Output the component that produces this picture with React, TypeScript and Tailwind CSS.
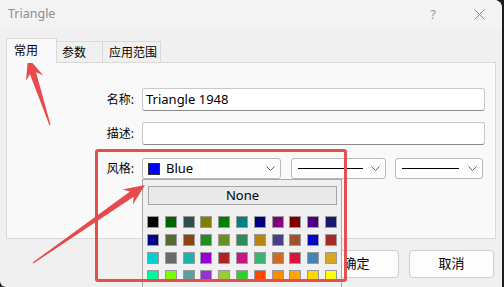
import React from "react";

const FONT = { fontFamily: '"Noto Sans", "Noto Sans CJK SC", sans-serif' };

const COLORS = [
  ["#000000", "#006400", "#2F4F4F", "#808000", "#008000", "#008080", "#000080", "#800080", "#800000", "#4B0082", "#191970"],
  ["#00008B", "#556B2F", "#8B4513", "#228B22", "#6B8E23", "#2E8B57", "#B8860B", "#483D8B", "#A0522D", "#0000CD", "#A52A2A"],
  ["#00CED1", "#696969", "#20B2AA", "#9400D3", "#B22222", "#C71585", "#3CB371", "#D2691E", "#DC143C", "#4682B4", "#DAA520"],
  ["#00FA9A", "#7CFC00", "#5F9EA0", "#9932CC", "#9ACD32", "#32CD32", "#FF4500", "#FF8C00", "#FFA500", "#FFD700", "#FFFF00"],
];

function Chevron() {
  return (
    <svg width="9" height="5" viewBox="0 0 9 5" className="shrink-0">
      <path d="M0.5 0.5 L4.5 4.5 L8.5 0.5" fill="none" stroke="#606060" strokeWidth="1" />
    </svg>
  );
}

function LineCombo({ width, line }: { width: string; line: string }) {
  return (
    <div className={`${width} h-[21px] flex items-center justify-between pl-[6px] pr-[5px] bg-[#fdfdfd] border border-[#b9b9b9] rounded-[3px]`}>
      <div className={`${line} h-px bg-black`} />
      <Chevron />
    </div>
  );
}

// Snipaste-style annotation arrow, from tail (sx,sy) to tip (tx,ty)
function arrowPoints(sx: number, sy: number, tx: number, ty: number) {
  const dx = tx - sx;
  const dy = ty - sy;
  const len = Math.hypot(dx, dy);
  const ux = dx / len;
  const uy = dy / len;
  const nx = -uy;
  const ny = ux;
  const at = (back: number, side: number) =>
    `${tx - ux * back + nx * side},${ty - uy * back + ny * side}`;
  const tail = (side: number) => `${sx + nx * side},${sy + ny * side}`;
  return [
    at(0, 0),
    at(21, 9),
    at(16, 3.2),
    tail(0.6),
    tail(-0.6),
    at(16, -3.2),
    at(21, -9),
  ].join(" ");
}

export default function App() {
  return (
    <div className="relative w-[504px] h-[287px] overflow-hidden bg-[#1d1d1d]" style={FONT}>
      {/* Dialog window */}
      <div className="w-[502px] h-full bg-[#f0f0f0] rounded-tr-[8px] rounded-bl-[6px] flex flex-col">
        {/* Title bar */}
        <div className="h-[29px] bg-[#f3f3f3] flex items-center pl-[8px] text-[12.5px] text-[#8e8e8e] rounded-tr-[8px]">
          <span>Triangle</span>
          <span className="ml-auto mr-[38px] text-[13px] text-[#9a9a9a]">?</span>
          <svg width="11" height="11" viewBox="0 0 11 11" className="mr-[17px]">
            <path d="M0.5 0.5 L10.5 10.5 M10.5 0.5 L0.5 10.5" stroke="#8a8a8a" strokeWidth="1" />
          </svg>
        </div>

        {/* Tabs */}
        <div className="mt-[9px] px-[6px] flex items-end h-[25px] text-[12px] text-black">
          <div className="relative z-10 w-[51px] h-[25px] bg-[#f9f9f9] border border-[#d9d9d9] border-b-0 pl-[7px] pt-[3px]">
            常用
          </div>
          <div className="w-[46px] h-[22px] border border-[#d9d9d9] border-l-0 flex items-center pl-[5px] pt-[1px]">
            参数
          </div>
          <div className="w-[58px] h-[22px] border border-[#d9d9d9] border-l-0 flex items-center pl-[6px] pt-[1px]">
            应用范围
          </div>
        </div>

        {/* Panel */}
        <div className="mx-[6px] -mt-px h-[177px] bg-[#f9f9f9] border border-[#d9d9d9] pt-[25px] pr-[10px]">
          <div className="grid grid-cols-[127px_1fr] gap-x-[8px] items-center text-[12px]">
            <div className="text-right">名称:</div>
            <div className="h-[23px] bg-white border border-[#c8c8c8] border-b-[#8a8a8a] rounded-[3px] flex items-center pl-[3px] text-[13px]">
              Triangle 1948
            </div>

            <div className="text-right mt-[11px]">描述:</div>
            <div className="mt-[11px] h-[23px] bg-white border border-[#c8c8c8] border-b-[#8a8a8a] rounded-[3px]" />

            <div className="text-right mt-[13px]">风格:</div>
            <div className="mt-[13px] flex items-center">
              <div className="w-[139px] h-[21px] flex items-center pl-[5px] pr-[5px] bg-[#fdfdfd] border border-[#b9b9b9] rounded-[3px]">
                <div className="w-[12px] h-[12px] bg-[#0000ff] border border-[#303030]" />
                <span className="ml-[6px] text-[13px]">Blue</span>
                <span className="ml-auto">
                  <Chevron />
                </span>
              </div>
              <div className="ml-[10px]">
                <LineCombo width="w-[95px]" line="w-[65px]" />
              </div>
              <div className="ml-[9px]">
                <LineCombo width="w-[88px]" line="w-[57px]" />
              </div>
            </div>
          </div>
        </div>

        {/* Buttons */}
        <div className="mt-[11px] flex justify-end gap-[10px] pr-[8px] text-[13px]">
          <div className="w-[85px] h-[28px] bg-[#fdfdfd] border border-[#d0d0d0] rounded-[4px] flex items-center justify-center">
            确定
          </div>
          <div className="w-[85px] h-[28px] bg-[#fdfdfd] border border-[#d0d0d0] rounded-[4px] flex items-center justify-center">
            取消
          </div>
        </div>
      </div>

      {/* Colour dropdown */}
      <div className="absolute left-[142px] top-[179px] w-[200px] h-[120px] bg-[#f0f0f0] border border-[#a8a8a8] pt-[6px] pl-[4px]">
        <div className="ml-[1px] w-[189px] h-[19px] bg-[#e9e9e9] border border-[#a6a6a6] flex items-center justify-center text-[13px]">
          None
        </div>
        <div className="mt-[11px] flex flex-col gap-y-[6px]">
          {COLORS.map((row, r) => (
            <div key={r} className="flex gap-x-[5.8px]">
              {row.map((c) => (
                <div
                  key={c}
                  className="w-[12px] h-[12px] border border-[#9a9a9a]"
                  style={{ backgroundColor: c }}
                />
              ))}
            </div>
          ))}
        </div>
      </div>

      {/* Annotation: highlight box */}
      <div className="absolute left-[95px] top-[149px] w-[252px] h-[133px] border-[3.5px] border-[#e44f50] rounded-[3px] pointer-events-none" />

      {/* Annotation: arrows */}
      <svg className="absolute inset-0 pointer-events-none" width="504" height="287">
        <polygon points={arrowPoints(50, 125, 28, 58)} fill="#e64a4c" />
        <polygon points={arrowPoints(33, 263, 145, 185)} fill="#e64a4c" />
      </svg>
    </div>
  );
}
